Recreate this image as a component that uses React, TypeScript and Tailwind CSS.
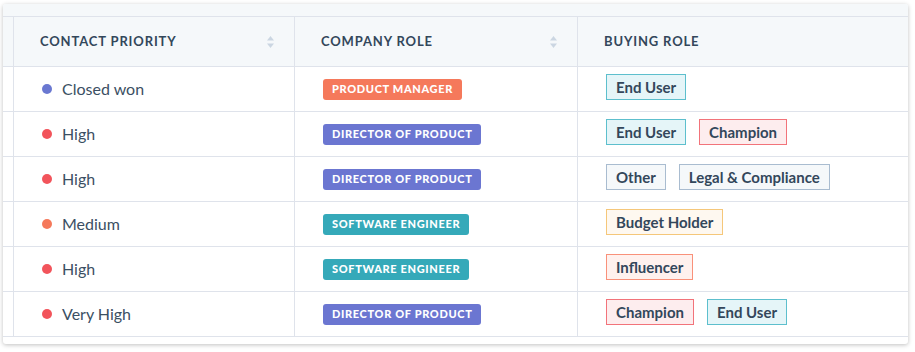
const rows = [
  { dot: "bg-[#6a78d1]", label: "Closed won", role: "Product Manager", roleBg: "bg-[#f5795b]", tags: ["End User"] },
  { dot: "bg-[#f2545b]", label: "High", role: "Director of Product", roleBg: "bg-[#6b76d1]", tags: ["End User", "Champion"] },
  { dot: "bg-[#f2545b]", label: "High", role: "Director of Product", roleBg: "bg-[#6b76d1]", tags: ["Other", "Legal & Compliance"] },
  { dot: "bg-[#f5795b]", label: "Medium", role: "Software Engineer", roleBg: "bg-[#35a9b9]", tags: ["Budget Holder"] },
  { dot: "bg-[#f2545b]", label: "High", role: "Software Engineer", roleBg: "bg-[#35a9b9]", tags: ["Influencer"] },
  { dot: "bg-[#f2545b]", label: "Very High", role: "Director of Product", roleBg: "bg-[#6b76d1]", tags: ["Champion", "End User"] },
];

const tagStyle: Record<string, string> = {
  "End User": "bg-[#e5f5f8] border-[#5dbfcd]",
  Champion: "bg-[#fdedee] border-[#f2737a]",
  Other: "bg-[#f5f8fa] border-[#a9bcd0]",
  "Legal & Compliance": "bg-[#f5f8fa] border-[#a9bcd0]",
  "Budget Holder": "bg-[#fef8f0] border-[#f5c77a]",
  Influencer: "bg-[#fff1ee] border-[#f9917a]",
};

const SortIcon = () => (
  <svg width="9" height="16" viewBox="0 0 9 16" className="text-[#cbd6e2]">
    <path d="M4.5 2 L8 6.5 H1 Z" fill="currentColor" />
    <path d="M4.5 14 L8 9.5 H1 Z" fill="currentColor" />
  </svg>
);

const App = () => {
  const cols = "grid grid-cols-[11px_281px_283px_1fr]";
  return (
    <div className="w-[915px] h-[352px] bg-white pt-[4px] pl-[3px]" style={{ fontFamily: "Lato, 'Noto Sans', sans-serif" }}>
      <div className="w-[905px] h-[340px] rounded-[3px] overflow-hidden bg-white shadow-[0_1px_4px_rgba(0,0,0,0.25)]">
        <div className="h-[13px] bg-[#f5f8fa] border-b border-[#dfe3eb]" />
        <div className={`${cols} h-[50px] bg-[#f5f8fa] border-b border-[#dfe3eb] text-[#33475b]`}>
          <div className="border-r border-[#dfe3eb]" />
          <div className="border-r border-[#dfe3eb] flex items-center justify-between pl-[26px] pr-[19px]">
            <span className="text-[13px] font-bold tracking-[0.85px]">CONTACT PRIORITY</span>
            <SortIcon />
          </div>
          <div className="border-r border-[#dfe3eb] flex items-center justify-between pl-[26px] pr-[19px]">
            <span className="text-[13px] font-bold tracking-[0.85px]">COMPANY ROLE</span>
            <SortIcon />
          </div>
          <div className="flex items-center pl-[26px]">
            <span className="text-[13px] font-bold tracking-[0.85px]">BUYING ROLE</span>
          </div>
        </div>
        {rows.map((r, i) => (
          <div key={i} className={`${cols} h-[45px] border-b border-[#dfe3eb]`}>
            <div className="border-r border-[#dfe3eb]" />
            <div className="border-r border-[#dfe3eb] flex items-center pl-[28px] gap-[10px]">
              <span className={`w-[10px] h-[10px] rounded-full ${r.dot}`} />
              <span className="text-[16px] text-[#3b4f63]">{r.label}</span>
            </div>
            <div className="border-r border-[#dfe3eb] flex items-center pl-[28px]">
              <span className={`${r.roleBg} text-white text-[11px] font-black tracking-[0.65px] uppercase rounded-[3px] h-[21px] px-[9px] flex items-center`}>
                {r.role}
              </span>
            </div>
            <div className="flex items-center pl-[28px] pb-[4px] gap-[13px]">
              {r.tags.map((t) => (
                <span key={t} className={`${tagStyle[t]} border-[1.5px] h-[26px] px-[9px] flex items-center text-[15px] font-bold text-[#33475b]`}>
                  {t}
                </span>
              ))}
            </div>
          </div>
        ))}
      </div>
    </div>
  );
};

export default App;
